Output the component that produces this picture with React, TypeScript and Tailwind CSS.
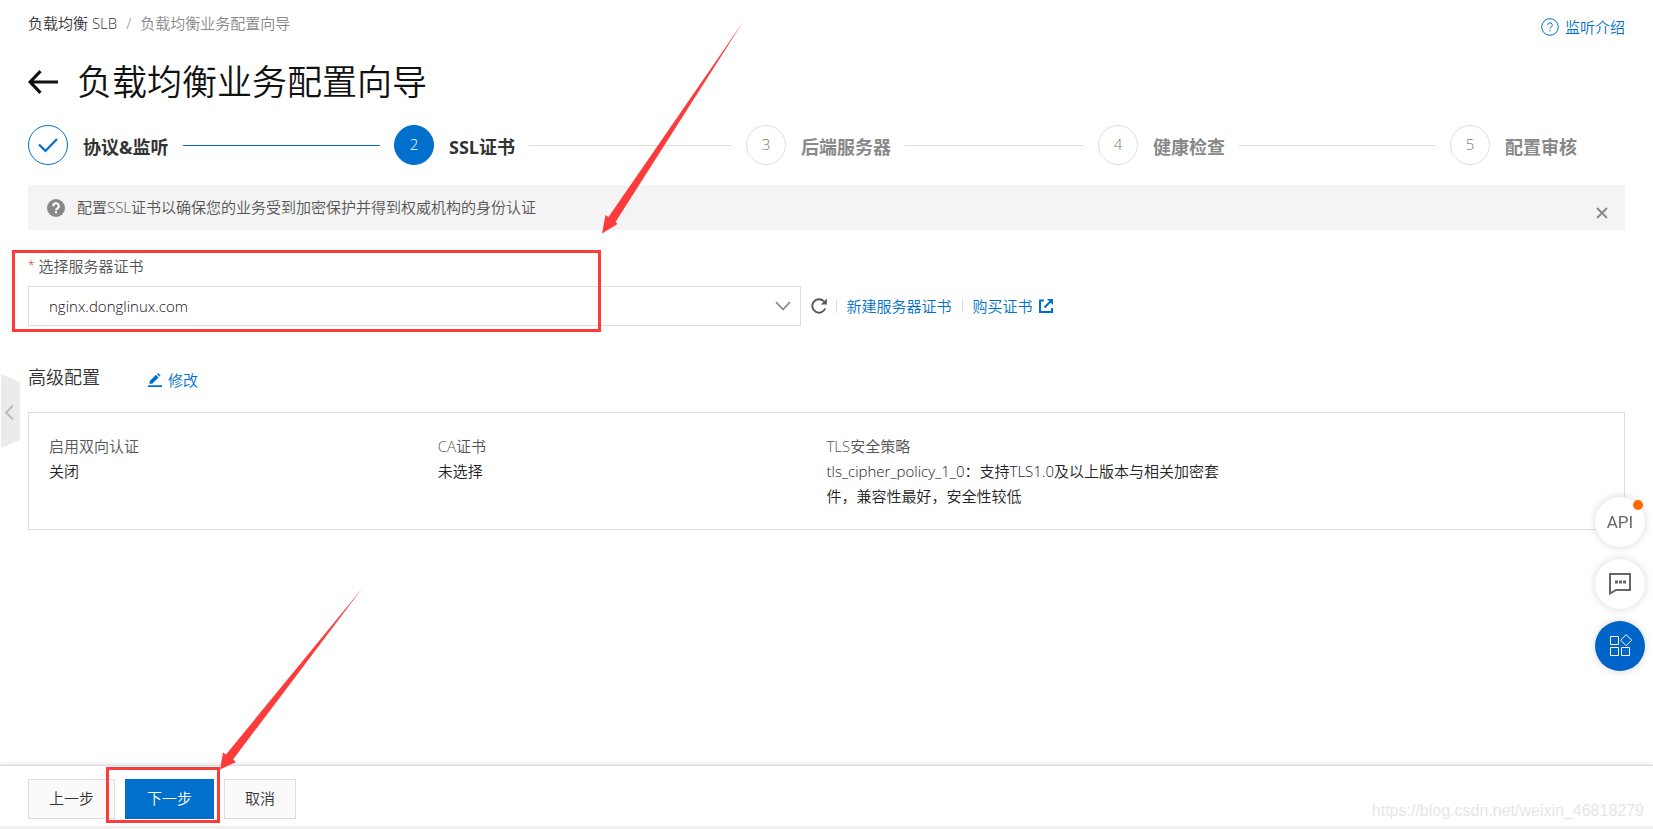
import type { ReactNode } from 'react';

const steps = [
    { label: '协议&监听', state: 'done' },
    { label: 'SSL证书', state: 'active' },
    { label: '后端服务器', state: 'wait' },
    { label: '健康检查', state: 'wait' },
    { label: '配置审核', state: 'wait' },
];

const circleStyles: Record<string, string> = {
    done: 'border-[#0070cc] text-[#0070cc]',
    active: 'border-[#0070cc] bg-[#0070cc] text-white',
    wait: 'border-[#dedede] text-[#777]',
};

function StepBar() {
    return (
        <ol className="grid h-10 grid-cols-[repeat(4,1fr)_189px] items-center">
            {steps.map((step, i) => {
                const last = i === steps.length - 1;
                return (
                    <li key={step.label} className={`flex items-center ${i === 0 ? '' : 'pl-[14px]'}`}>
                        <span
                            className={`flex size-10 shrink-0 items-center justify-center rounded-full border pb-0.5 ${circleStyles[step.state]}`}
                        >
                            {step.state === 'done' ? (
                                <svg className="mt-0.5 h-4 w-5" viewBox="0 0 20 16" fill="none" stroke="currentColor" strokeWidth="2.2">
                                    <path d="M1 7.5 7.5 14 19 2" />
                                </svg>
                            ) : (
                                i + 1
                            )}
                        </span>
                        <span
                            className={`ml-[15px] shrink-0 pt-1 text-[18px] leading-6 font-bold ${step.state === 'wait' ? 'text-[#888]' : 'text-[#333]'}`}
                        >
                            {step.label}
                        </span>
                        {!last && (
                            <span className={`ml-[14px] h-px flex-1 ${step.state === 'done' ? 'bg-[#0070cc]' : 'bg-[#dedede]'}`} />
                        )}
                    </li>
                );
            })}
        </ol>
    );
}

function Arrow({ className, viewBox, points }: { className: string; viewBox: string; points: string }) {
    return (
        <svg className={`pointer-events-none absolute ${className}`} viewBox={viewBox} fill="#fd3b3a" aria-hidden="true">
            <polygon points={points} />
        </svg>
    );
}

function ConfigItem({ label, children }: { label: string; children: ReactNode }) {
    return (
        <div className="-mr-2 leading-[25px]">
            <dt className="text-[#555]">{label}</dt>
            <dd className="text-[#222]">{children}</dd>
        </div>
    );
}

function FloatTools() {
    return (
        <div className="fixed right-2 bottom-[158px] flex flex-col gap-3">
            <button
                type="button"
                className="relative flex size-[50px] items-center justify-center rounded-full bg-white pb-px font-['Roboto',sans-serif] text-[17px] font-normal text-[#666] shadow-[0_0_8px_rgba(0,0,0,0.16)]"
            >
                API
                <span className="absolute top-[3px] right-[2px] size-[10px] rounded-full bg-[#ff6a00]" />
            </button>
            <button
                type="button"
                aria-label="反馈"
                className="flex size-[50px] items-center justify-center rounded-full bg-white text-[#666] shadow-[0_0_8px_rgba(0,0,0,0.16)]"
            >
                <svg width="24" height="24" viewBox="0 0 24 24" fill="none" stroke="currentColor" strokeWidth="2">
                    <path d="M2 2h20v16H8l-6 3.500z" />
                    <path d="M7 10h3M11 10h3M15 10h3" strokeWidth="3" />
                </svg>
            </button>
            <button
                type="button"
                aria-label="应用"
                className="flex size-[50px] items-center justify-center rounded-full bg-[#0064c8] text-white shadow-[0_0_8px_rgba(0,0,0,0.16)]"
            >
                <svg width="24" height="24" viewBox="0 0 24 24" fill="none" stroke="currentColor">
                    <path d="M2.500 2.500h8v8h-8zM2.500 13.500h8v8h-8zM13.500 13.500h8v8h-8zM18.200.700l5.500 5.500-5.500 5.500-5.500-5.500z" />
                </svg>
            </button>
        </div>
    );
}

export default function App() {
    return (
        <div className="relative flex min-h-screen flex-col overflow-hidden bg-white font-['Open_Sans','Noto_Sans_CJK_SC',sans-serif] text-[15px] leading-5 font-[350] text-[#333]">
            <main className="flex-1 px-7 pt-[13px]">
                <div className="flex items-start justify-between">
                    <nav className="flex gap-[9px]">
                        <a href="#slb">负载均衡 SLB</a>
                        <span className="text-[#888]">/</span>
                        <span className="text-[#888]">负载均衡业务配置向导</span>
                    </nav>
                    <a href="#intro" className="flex items-center gap-[6px] pt-1 text-[#0070cc]">
                        <svg width="18" height="18" viewBox="0 0 18 18" fill="none" stroke="currentColor">
                            <circle cx="9" cy="9" r="8.300" />
                            <path d="M6.700 7.200a2.300 2.300 0 1 1 3.300 2q-1 .5-1 1.600M9 12.200v1.300" />
                        </svg>
                        监听介绍
                    </a>
                </div>

                <div className="mt-[21px] flex h-12 items-center gap-[19px]">
                    <a href="#back" aria-label="返回" className="text-[#111]">
                        <svg width="30" height="24" viewBox="0 0 30 24" fill="none" stroke="currentColor" strokeWidth="3.200">
                            <path d="M12.500 1.200 2.200 12l10.300 10.800M2 12h28" />
                        </svg>
                    </a>
                    <h1 className="text-[35px] leading-[48px] text-[#111]">负载均衡业务配置向导</h1>
                </div>

                <div className="mt-[19px]">
                    <StepBar />
                </div>

                <div className="mt-5 flex h-[45px] items-center bg-[#f4f4f4] pr-[17px] pl-[19px] text-[#555]">
                    <svg width="18" height="18" viewBox="0 0 18 18">
                        <circle cx="9" cy="9" r="9" fill="#888" />
                        <path d="M6.200 7.200a2.800 2.800 0 1 1 4.100 2.300q-1.300.7-1.300 1.700M9 12.200v2" fill="none" stroke="#fff" strokeWidth="2" />
                    </svg>
                    <p className="ml-3 flex-1 pb-px">配置SSL证书以确保您的业务受到加密保护并得到权威机构的身份认证</p>
                    <button type="button" aria-label="关闭提示" className="pt-[10px] text-[#888]">
                        <svg width="12" height="12" viewBox="0 0 12 12" fill="none" stroke="currentColor" strokeWidth="1.800">
                            <path d="m1 1 10 10M11 1 1 11" />
                        </svg>
                    </button>
                </div>

                <section className="relative mt-[26px]">
                    <label htmlFor="cert" className="flex gap-1 text-[#555]">
                        <span className="text-[12px] text-[#d93026]">*</span>
                        选择服务器证书
                    </label>
                    <div className="mt-[10px] flex items-center">
                        <div className="relative w-[calc(50%-26px)]">
                            <select
                                id="cert"
                                className="block h-10 w-full appearance-none border border-[#dedede] bg-white px-5 text-[#111]"
                            >
                                <option>nginx.donglinux.com</option>
                            </select>
                            <svg
                                className="pointer-events-none absolute top-[15px] right-[10px]"
                                width="16"
                                height="10"
                                viewBox="0 0 16 10"
                                fill="none"
                                stroke="#888"
                                strokeWidth="1.800"
                            >
                                <path d="m1 1 7 7.500L15 1" />
                            </svg>
                        </div>
                        <button type="button" aria-label="刷新" className="ml-[10px] text-[#555]">
                            <svg width="16" height="16" viewBox="0 0 16 16">
                                <path d="M14.200 10.500A6.700 6.700 0 1 1 12.800 3.300" fill="none" stroke="currentColor" strokeWidth="1.900" />
                                <path d="M15.800.5v6h-6z" fill="currentColor" />
                            </svg>
                        </button>
                        <div className="ml-[9px] flex items-center gap-[10px] text-[#0070cc]">
                            <span className="h-[14px] w-px bg-[#dedede]" />
                            <a href="#create">新建服务器证书</a>
                            <span className="h-[14px] w-px bg-[#dedede]" />
                            <a href="#buy" className="flex items-center gap-[6px]">
                                购买证书
                                <svg width="14" height="14" viewBox="0 0 14 14" fill="none" stroke="currentColor" strokeWidth="2">
                                    <path d="M5 1.500H1V13h12V9M5.500 8.500 11.500 2.500" />
                                    <path d="M8 0h6v6z" fill="currentColor" stroke="none" />
                                </svg>
                            </a>
                        </div>
                    </div>
                    <div className="pointer-events-none absolute -top-[6px] -left-4 h-[82px] w-[589px] border-[3px] border-[#fd3b3a]" />
                </section>

                <div className="mt-[39px] flex h-6 items-center">
                    <h2 className="text-[18px] leading-6">高级配置</h2>
                    <a href="#edit" className="ml-12 flex items-center gap-[6px] pt-[6px] text-[#0070cc]">
                        <svg width="14" height="14" viewBox="0 0 14 14" fill="currentColor">
                            <path d="M0 12.300h14V14H0zM1.500 8.200 8 1.800l2.600 2.600L4.200 10.800H1.500zM8.900 1 10 0l2.600 2.500-1.100 1.100z" />
                        </svg>
                        修改
                    </a>
                </div>

                <dl className="mt-[23px] grid grid-cols-4 border border-[#dedede] px-5 pt-[21px] pb-5">
                    <ConfigItem label="启用双向认证">关闭</ConfigItem>
                    <ConfigItem label="CA证书">未选择</ConfigItem>
                    <ConfigItem label="TLS安全策略">
                        tls_cipher_policy_1_0：支持TLS1.0及以上版本与相关加密套件，兼容性最好，安全性较低
                    </ConfigItem>
                </dl>
            </main>

            <footer className="flex h-16 justify-between border-t border-[#dedede] border-b-[3px] border-b-[#f0f0f0] px-7 pt-[13px] shadow-[0_-1px_4px_rgba(0,0,0,0.12)]">
                <div className="flex gap-[10px]">
                    <button type="button" className="h-10 border border-[#dedede] bg-[#fafafa] px-5 pb-0.5">
                        上一步
                    </button>
                    <div className="relative">
                        <button type="button" className="h-10 bg-[#0070cc] px-[22px] pb-0.5 text-white">
                            下一步
                        </button>
                        <div className="pointer-events-none absolute -top-3 -right-[6px] -left-[19px] h-14 border-[3px] border-[#fd3b3a]" />
                    </div>
                    <button type="button" className="h-10 border border-[#dedede] bg-[#fafafa] px-5 pb-0.5">
                        取消
                    </button>
                </div>
            </footer>

            <button type="button" aria-label="收起" className="absolute top-[374px] left-px">
                <svg width="19" height="74" viewBox="0 0 19 74">
                    <path d="M0 0l19 8v58L0 74z" fill="#ebebeb" />
                    <path d="M12 31.500 5 38.500l7 7" fill="none" stroke="#bbb" strokeWidth="2" />
                </svg>
            </button>

            <Arrow
                className="top-[22px] left-[602px] h-[212px] w-[142px]"
                viewBox="0 0 142 212"
                points="141,0 6.500,195 3.500,193 0,211.500 15.500,202 13.500,200"
            />
            <Arrow
                className="top-[588px] left-[220px] h-[182px] w-[143px]"
                viewBox="0 0 143 182"
                points="142.500,0 6,166.500 3,164.500 0,181.500 16,174 13,171.500"
            />

            <FloatTools />

            <span className="pointer-events-none absolute right-[9px] bottom-2 font-['Liberation_Sans',sans-serif] text-[16px] text-[#e6e6e6]">
                https://blog.csdn.net/weixin_46818279
            </span>
        </div>
    );
}
